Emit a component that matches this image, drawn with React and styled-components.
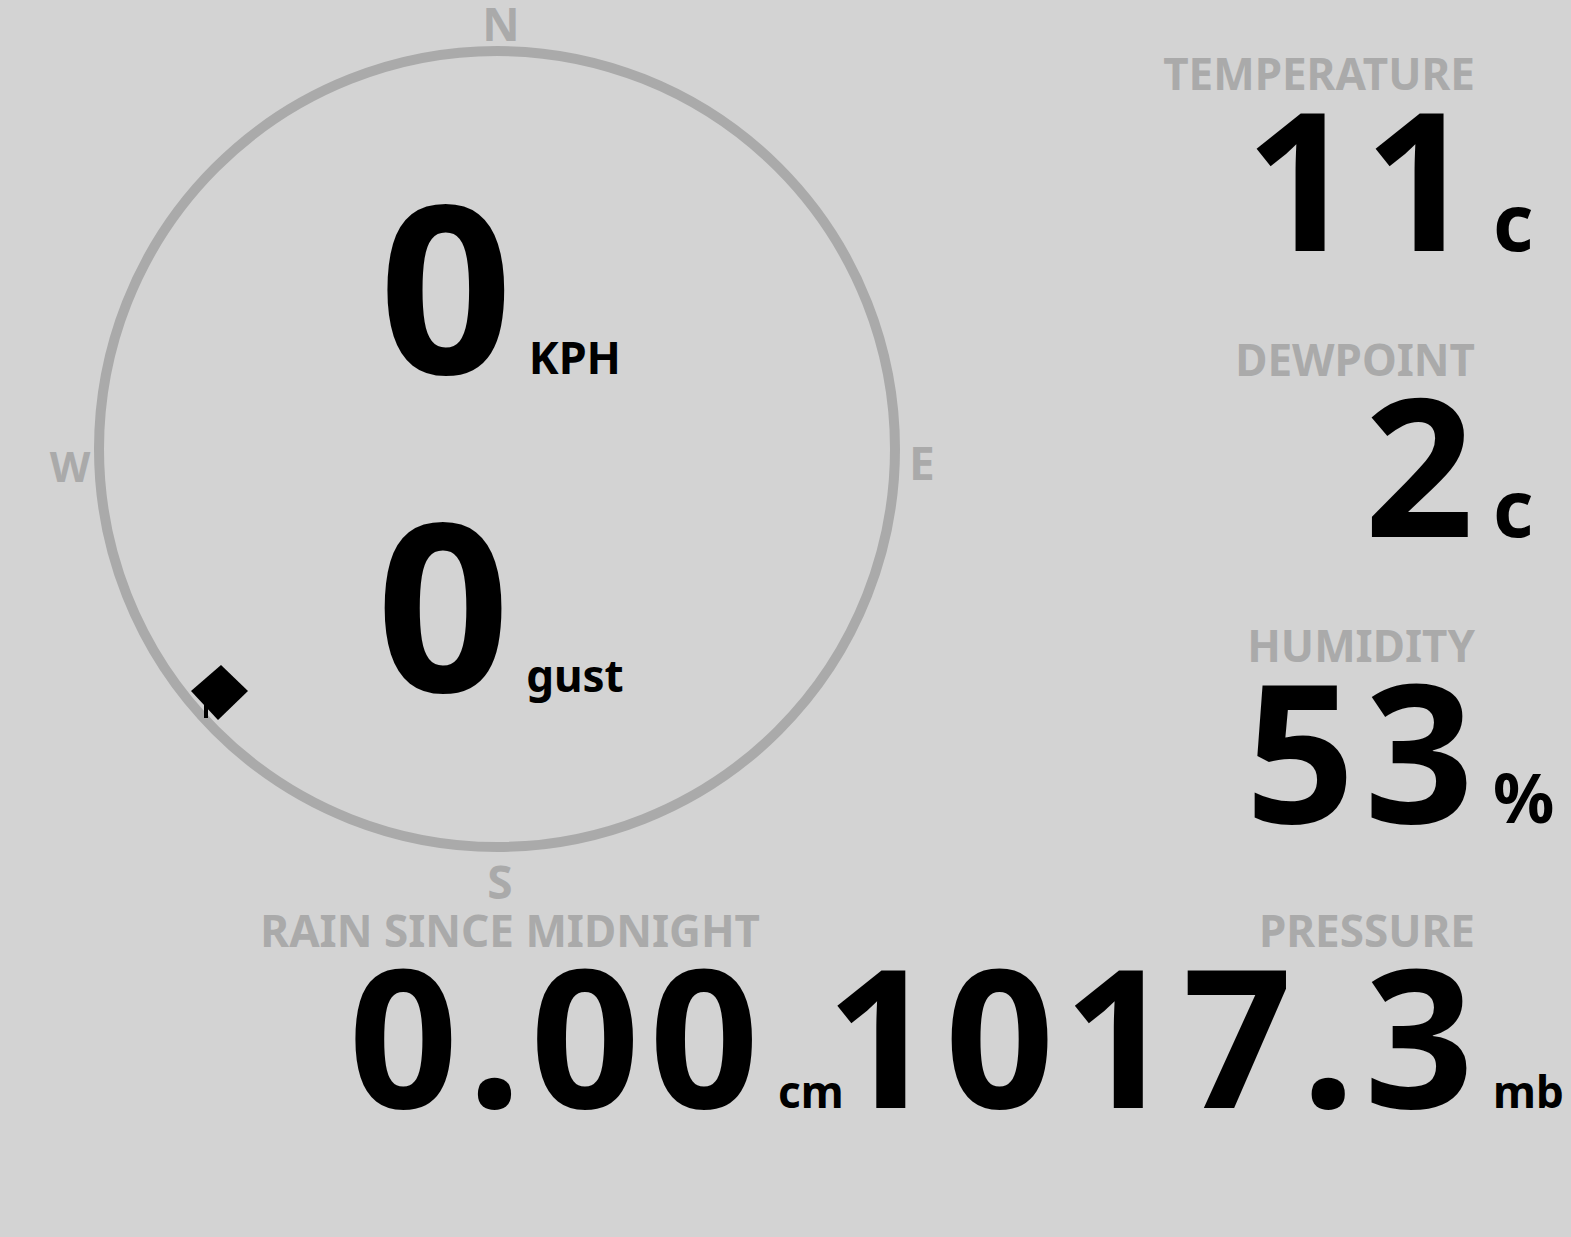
import styled, { createGlobalStyle } from 'styled-components'

const Global = createGlobalStyle`
  html, body {
    margin: 0;
    padding: 0;
    background: #d3d3d3;
  }
  body {
    font-family: "Noto Sans", "DejaVu Sans", sans-serif;
    font-weight: 700;
  }
`

const Page = styled.div`
  width: 1571px;
  height: 1237px;
  box-sizing: border-box;
  padding-right: 96px;
  display: flex;
  flex-direction: column;
  background: #d3d3d3;
  overflow: hidden;
`

const Top = styled.div`
  display: flex;
  align-items: flex-start;
`

const Compass = styled.div`
  position: relative;
  flex: none;
  width: 1000px;
  height: 906px;
  box-sizing: border-box;
  padding-top: 184px;
  display: flex;
  flex-direction: column;
  align-items: center;
  gap: 118px;
`

const Dial = styled.svg`
  position: absolute;
  inset: 0;
  width: 1000px;
  height: 906px;
`

const Cardinal = styled.span`
  position: absolute;
  left: ${p => p.x}px;
  top: ${p => p.y}px;
  transform: translate(-50%, -50%);
  font-size: ${p => p.size || 46}px;
  line-height: 0.8;
  color: #aaaaaa;
`

const SpeedRow = styled.div`
  position: relative;
  display: flex;
  align-items: baseline;
  gap: 16px;
  height: 200px;
`

const SpeedValue = styled.span`
  font-size: 234px;
  line-height: 200px;
  color: #000;
`

const SpeedUnit = styled.span`
  font-size: ${p => p.size}px;
  line-height: 1;
  color: #000;
`

const Readings = styled.div`
  flex: 1;
  display: flex;
  flex-direction: column;
  align-items: flex-end;
  padding-top: 49px;
  gap: 75px;
`

const Bottom = styled.div`
  display: grid;
  grid-template-columns: 760px 1fr;
  align-items: start;
`

const Stat = styled.div`
  display: flex;
  flex-direction: column;
  align-items: flex-end;
  justify-self: end;
`

const Label = styled.div`
  font-size: 44px;
  line-height: 48px;
  color: #aaaaaa;
  white-space: nowrap;
`

const ValueRow = styled.div`
  display: flex;
  align-items: baseline;
  justify-content: flex-end;
`

const Value = styled.span`
  font-size: 192px;
  line-height: 160px;
  letter-spacing: 9px;
  margin-right: -30px;
  color: #000;
  white-space: nowrap;
`

const Unit = styled.span`
  flex: none;
  width: 0;
  margin-left: 40px;
  margin-right: -18px;
  font-size: ${p => p.size}px;
  line-height: 1;
  color: #000;
  white-space: nowrap;
`

function Reading({ label, value, unit, unitSize }) {
  return (
    <Stat>
      <Label>{label}</Label>
      <ValueRow>
        <Value>{value}</Value>
        <Unit size={unitSize}>{unit}</Unit>
      </ValueRow>
    </Stat>
  )
}

function App() {
  return (
    <Page>
      <Global />
      <Top>
        <Compass>
          <Dial viewBox="0 0 1000 906">
            <circle cx="497" cy="449" r="398" fill="none" stroke="#aaaaaa" strokeWidth="10" />
            <polygon points="221,665 248,691 218,720 191,691" fill="#000" />
            <rect x="204" y="704" width="4" height="14" fill="#000" />
          </Dial>
          <Cardinal x={501} y={23}>N</Cardinal>
          <Cardinal x={922} y={462}>E</Cardinal>
          <Cardinal x={500} y={881}>S</Cardinal>
          <Cardinal x={70} y={466} size={42}>W</Cardinal>
          <SpeedRow>
            <SpeedValue>0</SpeedValue>
            <SpeedUnit size={45}>KPH</SpeedUnit>
          </SpeedRow>
          <SpeedRow>
            <SpeedValue>0</SpeedValue>
            <SpeedUnit size={44}>gust</SpeedUnit>
          </SpeedRow>
        </Compass>
        <Readings>
          <Reading label="TEMPERATURE" value="11" unit="c" unitSize={78} />
          <Reading label="DEWPOINT" value="2" unit="c" unitSize={78} />
          <Reading label="HUMIDITY" value="53" unit="%" unitSize={68} />
        </Readings>
      </Top>
      <Bottom>
        <Reading label="RAIN SINCE MIDNIGHT" value="0.00" unit="cm" unitSize={44} />
        <Reading label="PRESSURE" value="1017.3" unit="mb" unitSize={44} />
      </Bottom>
    </Page>
  )
}

export default App
